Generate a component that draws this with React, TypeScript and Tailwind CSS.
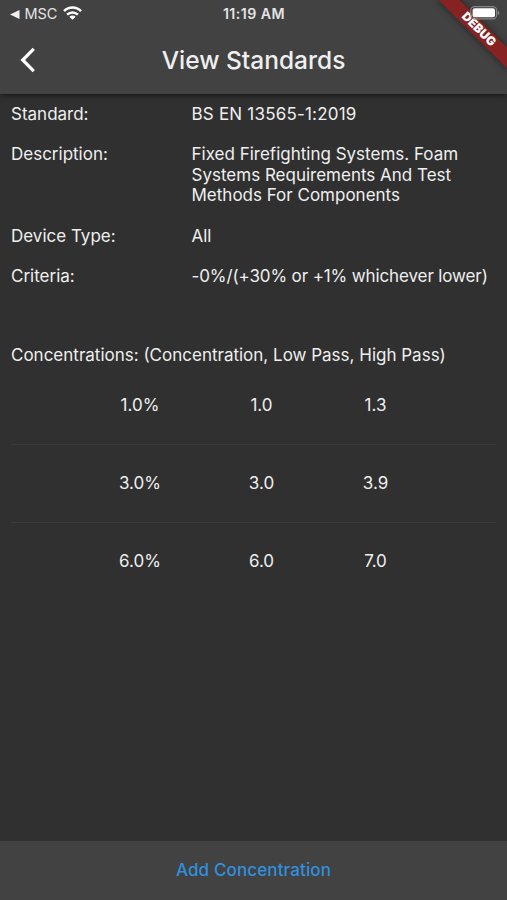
const details = [
  { label: 'Standard:', lines: ['BS EN 13565-1:2019'], tracking: 'tracking-[0.2px]' },
  {
    label: 'Description:',
    lines: ['Fixed Firefighting Systems. Foam', 'Systems Requirements And Test', 'Methods For Components'],
    tracking: 'tracking-normal',
  },
  { label: 'Device Type:', lines: ['All'], tracking: 'tracking-normal' },
  { label: 'Criteria:', lines: ['-0%/(+30% or +1% whichever lower)'], tracking: 'tracking-[-0.12px]' },
];

const rows = [
  ['1.0%', '1.0', '1.3'],
  ['3.0%', '3.0', '3.9'],
  ['6.0%', '6.0', '7.0'],
];

function StatusBar() {
  return (
    <div className="grid h-[27px] grid-cols-3 items-center pt-px text-[#e4e4e4]">
      <div className="flex items-center pl-[10px]">
        <svg width="10" height="9" viewBox="0 0 10 9" fill="#f0f0f0">
          <path d="M0 4.5 9.5 0v9z" />
        </svg>
        <span className="ml-[4.5px] text-[14.5px] leading-none tracking-[-0.1px]">MSC</span>
        <svg className="ml-[5.5px] -translate-y-px" width="19" height="14" viewBox="0 0 19 14" fill="none" stroke="#fff" strokeWidth="2.5">
          <path d="M1 5.2C5.8.3 13.2.3 18 5.2" />
          <path d="M4.1 8.7c3.1-3 7.7-3 10.8 0" />
          <path d="M6.3 10.7c1.8-1.5 4.6-1.5 6.4 0l-3.2 3.1z" fill="#fff" stroke="none" />
        </svg>
      </div>
      <div className="pl-px text-center text-[14.2px] font-semibold leading-none tracking-[0.45px] whitespace-nowrap">11:19 AM</div>
      <div className="relative z-10 flex justify-end pr-[7px]">
        <svg className="-translate-y-px" width="30" height="14" viewBox="0 0 30 14">
          <rect x="0.8" y="0.6" width="25.8" height="12.3" rx="3.6" fill="none" stroke="#858585" strokeWidth="1.1" />
          <rect x="2.6" y="2.2" width="22.4" height="9.1" rx="2" fill="#fff" />
          <path d="M27.7 4.4c2.2 1 2.2 3.7 0 4.7z" fill="#858585" />
        </svg>
      </div>
    </div>
  );
}

function DebugBanner() {
  return (
    <div className="absolute top-[22px] left-[429px] flex h-[15px] w-[99px] rotate-45 items-center justify-center bg-[#872222] text-[12.2px] leading-none font-black tracking-normal text-white shadow-[0_0_7px_rgba(0,0,0,0.5)]">
      DEBUG
    </div>
  );
}

export default function App() {
  return (
    <div className="relative flex h-[900px] w-[507px] flex-col overflow-hidden bg-[#303030] font-['Inter',sans-serif] text-[17px] leading-[20.7px] font-[440] text-[#efefef]">
      <header className="z-10 h-[94px] shrink-0 bg-[#424242] shadow-[0_2px_5px_rgba(0,0,0,0.45)]">
        <DebugBanner />
        <StatusBar />
        <div className="grid h-[66px] grid-cols-[60px_1fr_60px] items-center">
          <svg className="ml-[19.5px]" width="16" height="26" viewBox="0 0 16 26" fill="none" stroke="#fff" strokeWidth="3.2">
            <path d="M13.8 1.8 2.7 13l11.1 11.2" />
          </svg>
          <h1 className="pt-px text-center text-[24.5px] leading-none font-medium">View Standards</h1>
        </div>
      </header>
      <main className="flex-1 px-[11px] pt-[9.5px]">
        <dl className="flex flex-col gap-[19.8px]">
          {details.map((item) => (
            <div key={item.label} className="flex">
              <dt className="w-[180.5px] shrink-0">{item.label}</dt>
              <dd className={`whitespace-nowrap ${item.tracking}`}>
                {item.lines.map((line) => (
                  <div key={line}>{line}</div>
                ))}
              </dd>
            </div>
          ))}
        </dl>
        <p className="mt-[58px] whitespace-nowrap">Concentrations: (Concentration, Low Pass, High Pass)</p>
        <div>
          {rows.map((row, i) => (
            <div
              key={row[0]}
              className={
                i === 0
                  ? 'flex h-[79px] border-b border-[#3a3a3a] pt-[29px] pl-[72px] text-center'
                  : i === 1
                    ? 'flex h-[78px] border-b border-[#3a3a3a] pt-[28px] pl-[72px] text-center'
                    : 'flex h-[78px] pt-[28px] pl-[72px] text-center'
              }
            >
              <span className="w-[114px]">{row[0]}</span>
              <span className="w-[129px]">{row[1]}</span>
              <span className="w-[99px]">{row[2]}</span>
            </div>
          ))}
        </div>
      </main>
      <footer className="flex h-[59px] shrink-0 items-center justify-center bg-[#424242] font-medium tracking-[0.13px] text-[#3090df]">
        Add Concentration
      </footer>
    </div>
  );
}
